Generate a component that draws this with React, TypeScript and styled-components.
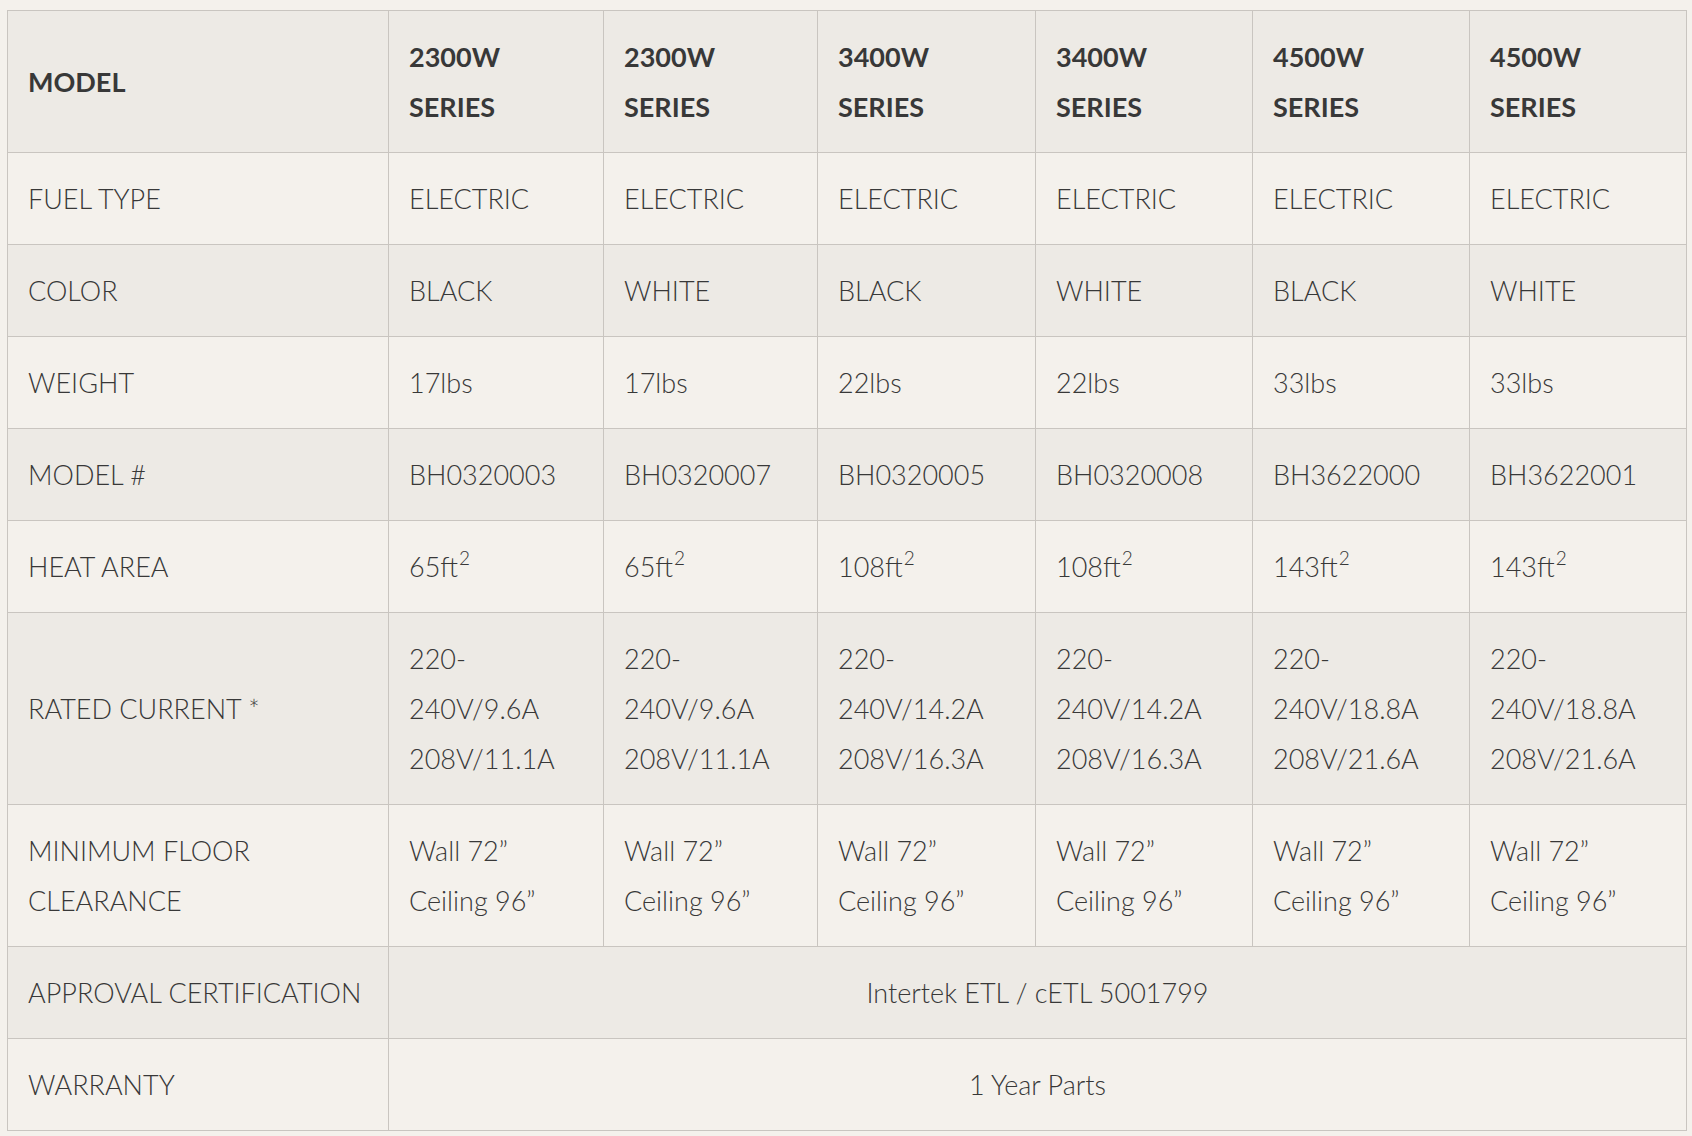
import React from "react";
import styled, {createGlobalStyle} from "styled-components";

const GlobalStyle = createGlobalStyle`
  body {
    margin: 0;
    background: #f4f1ec;
    font-family: Lato, "Open Sans", sans-serif;
    color: #383838;
  }
`;

const Page = styled.div`
  padding: 10px 6px 6px 7px;
`;

const Table = styled.table`
  width: 1679px;
  border-collapse: collapse;
  table-layout: fixed;
  border: 1px solid #dcd8d3;
  font-size: 27px;
  line-height: 50px;
`;

const Row = styled.tr<{$shade?: boolean}>`
  background: ${(p) => (p.$shade ? "#edeae5" : "#f4f1ec")};
`;

const Cell = styled.td<{$center?: boolean}>`
  border: 1px solid #c9c5c0;
  padding: 21px 20px 20px 20px;
  vertical-align: middle;
  font-weight: 300;
  text-align: ${(p) => (p.$center ? "center" : "left")};
`;

const HeadCell = styled.th`
  border: 1px solid #c9c5c0;
  padding: 21px 20px 20px 20px;
  text-align: left;
  vertical-align: middle;
  font-weight: 700;
`;

const Sup = styled.sup`
  font-size: 19px;
  line-height: 0;
  vertical-align: 12px;
  margin-left: 1px;
`;

const models = [
  {watt: "2300W", color: "BLACK", weight: "17lbs", num: "BH0320003", area: "65", cur: "240V/9.6A", cur2: "208V/11.1A"},
  {watt: "2300W", color: "WHITE", weight: "17lbs", num: "BH0320007", area: "65", cur: "240V/9.6A", cur2: "208V/11.1A"},
  {watt: "3400W", color: "BLACK", weight: "22lbs", num: "BH0320005", area: "108", cur: "240V/14.2A", cur2: "208V/16.3A"},
  {watt: "3400W", color: "WHITE", weight: "22lbs", num: "BH0320008", area: "108", cur: "240V/14.2A", cur2: "208V/16.3A"},
  {watt: "4500W", color: "BLACK", weight: "33lbs", num: "BH3622000", area: "143", cur: "240V/18.8A", cur2: "208V/21.6A"},
  {watt: "4500W", color: "WHITE", weight: "33lbs", num: "BH3622001", area: "143", cur: "240V/18.8A", cur2: "208V/21.6A"},
];

export default function App() {
  return (
    <Page>
      <GlobalStyle />
      <Table>
        <colgroup>
          <col style={{width: 381}} />
          <col style={{width: 215}} />
          <col style={{width: 214}} />
          <col style={{width: 218}} />
          <col style={{width: 217}} />
          <col style={{width: 217}} />
          <col style={{width: 217}} />
        </colgroup>
        <thead>
          <Row $shade>
            <HeadCell>MODEL</HeadCell>
            {models.map((m, i) => (
              <HeadCell key={i}>
                {m.watt}
                <br />
                SERIES
              </HeadCell>
            ))}
          </Row>
        </thead>
        <tbody>
          <Row>
            <Cell>FUEL TYPE</Cell>
            {models.map((m, i) => (
              <Cell key={i}>ELECTRIC</Cell>
            ))}
          </Row>
          <Row $shade>
            <Cell>COLOR</Cell>
            {models.map((m, i) => (
              <Cell key={i}>{m.color}</Cell>
            ))}
          </Row>
          <Row>
            <Cell>WEIGHT</Cell>
            {models.map((m, i) => (
              <Cell key={i}>{m.weight}</Cell>
            ))}
          </Row>
          <Row $shade>
            <Cell>MODEL #</Cell>
            {models.map((m, i) => (
              <Cell key={i}>{m.num}</Cell>
            ))}
          </Row>
          <Row>
            <Cell>HEAT AREA</Cell>
            {models.map((m, i) => (
              <Cell key={i}>
                {m.area}ft<Sup>2</Sup>
              </Cell>
            ))}
          </Row>
          <Row $shade>
            <Cell>RATED CURRENT *</Cell>
            {models.map((m, i) => (
              <Cell key={i}>
                220-
                <br />
                {m.cur}
                <br />
                {m.cur2}
              </Cell>
            ))}
          </Row>
          <Row>
            <Cell>
              MINIMUM FLOOR
              <br />
              CLEARANCE
            </Cell>
            {models.map((m, i) => (
              <Cell key={i}>
                Wall 72”
                <br />
                Ceiling 96”
              </Cell>
            ))}
          </Row>
          <Row $shade>
            <Cell>APPROVAL CERTIFICATION</Cell>
            <Cell colSpan={6} $center>
              Intertek ETL / cETL 5001799
            </Cell>
          </Row>
          <Row>
            <Cell>WARRANTY</Cell>
            <Cell colSpan={6} $center>
              1 Year Parts
            </Cell>
          </Row>
        </tbody>
      </Table>
    </Page>
  );
}
